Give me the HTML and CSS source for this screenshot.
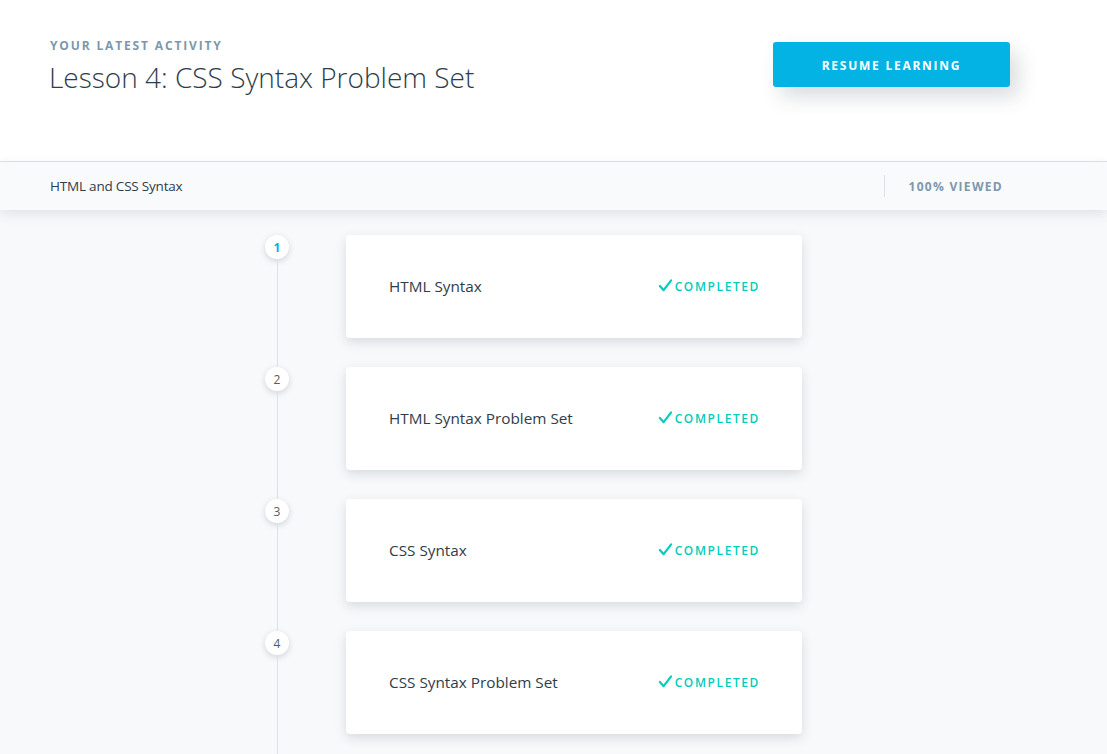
FILE: index.html
```html
<!DOCTYPE html>
<html>
<head>
<meta charset="utf-8">
<link rel="stylesheet" href="styles.css">
</head>
<body>
<header class="hero">
  <div class="hero-text">
    <div class="eyebrow">YOUR LATEST ACTIVITY</div>
    <h1 class="title">Lesson 4: CSS Syntax Problem Set</h1>
  </div>
  <button class="resume">RESUME LEARNING</button>
</header>
<div class="subbar">
  <div class="subbar-title">HTML and CSS Syntax</div>
  <div class="subbar-status">100% VIEWED</div>
</div>
<main class="timeline">
  <div class="item">
    <div class="marker"><div class="dot dot-active">1</div><div class="line"></div></div>
    <div class="card"><span class="card-title">HTML Syntax</span><span class="done"><svg class="check" viewBox="0 0 16 16" width="15" height="15"><path d="M2 8.5 L6 13 L14 2.5" fill="none" stroke="#02ccba" stroke-width="2.3" stroke-linecap="round" stroke-linejoin="round"/></svg>COMPLETED</span></div>
  </div>
  <div class="item">
    <div class="marker"><div class="dot">2</div><div class="line"></div></div>
    <div class="card"><span class="card-title">HTML Syntax Problem Set</span><span class="done"><svg class="check" viewBox="0 0 16 16" width="15" height="15"><path d="M2 8.5 L6 13 L14 2.5" fill="none" stroke="#02ccba" stroke-width="2.3" stroke-linecap="round" stroke-linejoin="round"/></svg>COMPLETED</span></div>
  </div>
  <div class="item">
    <div class="marker"><div class="dot">3</div><div class="line"></div></div>
    <div class="card"><span class="card-title">CSS Syntax</span><span class="done"><svg class="check" viewBox="0 0 16 16" width="15" height="15"><path d="M2 8.5 L6 13 L14 2.5" fill="none" stroke="#02ccba" stroke-width="2.3" stroke-linecap="round" stroke-linejoin="round"/></svg>COMPLETED</span></div>
  </div>
  <div class="item">
    <div class="marker"><div class="dot">4</div><div class="line"></div></div>
    <div class="card"><span class="card-title">CSS Syntax Problem Set</span><span class="done"><svg class="check" viewBox="0 0 16 16" width="15" height="15"><path d="M2 8.5 L6 13 L14 2.5" fill="none" stroke="#02ccba" stroke-width="2.3" stroke-linecap="round" stroke-linejoin="round"/></svg>COMPLETED</span></div>
  </div>
</main>
</body>
</html>
```
FILE: styles.css
```css
* { box-sizing: border-box; }
html, body { margin: 0; padding: 0; }
body {
  font-family: "Open Sans", "Liberation Sans", sans-serif;
  background: #f8f9fb;
  color: #2e3d49;
  overflow: hidden;
  height: 754px;
}
.hero {
  background: #fff;
  height: 162px;
  border-bottom: 1px solid #dee3e8;
  display: flex;
  justify-content: space-between;
  align-items: flex-start;
  padding: 37px 97px 0 50px;
}
.eyebrow {
  font-size: 12px;
  font-weight: 700;
  letter-spacing: 1.85px;
  color: #7d97ad;
  line-height: 18px;
}
.title {
  margin: 3px 0 0 -1px;
  font-size: 28px;
  font-weight: 300;
  line-height: 38px;
  color: #2e3d49;
}
.resume {
  margin-top: 5px;
  width: 237px;
  height: 45px;
  border: none;
  border-radius: 3px;
  background: #02b3e4;
  color: #fff;
  font-family: inherit;
  font-size: 12px;
  font-weight: 700;
  letter-spacing: 1.75px;
  padding-top: 2px;
  box-shadow: 8px 10px 20px rgba(46, 61, 73, 0.18);
}
.subbar {
  height: 48px;
  background: #f9fafb;
  display: flex;
  align-items: center;
  justify-content: space-between;
  padding: 0 104px 0 50px;
  box-shadow: 0 4px 12px rgba(46, 61, 73, 0.12);
  position: relative;
}
.subbar-title {
  font-size: 13.5px;
  color: #2e3d49;
  letter-spacing: -0.2px;
}
.subbar-status {
  border-left: 1px solid #dbe2e8;
  padding: 4px 0 2px 23px;
  font-size: 12px;
  font-weight: 700;
  letter-spacing: 1.3px;
  color: #7d97ad;
  line-height: 16px;
}
.timeline {
  padding: 25px 0 0 265px;
}
.item {
  display: flex;
  gap: 57px;
  padding-bottom: 29px;
}
.marker {
  width: 24px;
  display: flex;
  flex-direction: column;
  align-items: center;
}
.dot {
  width: 24px;
  height: 24px;
  border-radius: 50%;
  background: #fff;
  box-shadow: 0 2px 6px rgba(46, 61, 73, 0.2);
  font-size: 12px;
  font-weight: 400;
  display: flex;
  align-items: center;
  justify-content: center;
  color: #525c65;
  flex: none;
}
.dot-active { color: #02b3e4; font-weight: 700; }
.line {
  flex: 1;
  width: 1px;
  background: #dbe2e8;
  margin-bottom: -29px;
}
.card {
  width: 456px;
  height: 103px;
  background: #fff;
  border-radius: 4px;
  box-shadow: 0 4px 12px rgba(46, 61, 73, 0.16);
  display: flex;
  align-items: center;
  justify-content: space-between;
  padding: 0 42px 1px 43px;
}
.card-title {
  font-size: 15.3px;
  color: #2e3d49;
}
.done {
  display: flex;
  align-items: center;
  gap: 2px;
  font-size: 12px;
  font-weight: 600;
  letter-spacing: 1.6px;
  color: #02ccba;
}
.check { display: block; margin-top: -2px; }
```
